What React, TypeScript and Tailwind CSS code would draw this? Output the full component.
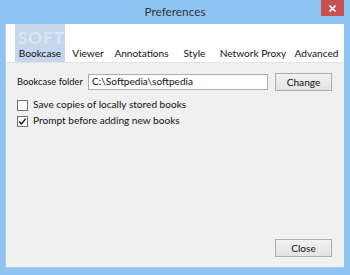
import React from 'react';

const TABS = [
  { label: 'Bookcase', w: 'w-[50px]', active: true },
  { label: 'Viewer', w: 'w-[46px]' },
  { label: 'Annotations', w: 'w-[61px]' },
  { label: 'Style', w: 'w-[45px]' },
  { label: 'Network Proxy', w: 'w-[72px]' },
  { label: 'Advanced', w: 'w-[55px]' },
];

function Checkbox({ checked, label }: { checked?: boolean; label: string }) {
  return (
    <label className="flex items-center h-[16px]">
      <span className="w-[11px] h-[11px] border border-[#707070] bg-white flex items-center justify-center">
        {checked && (
          <svg width="9" height="9" viewBox="0 0 9 9">
            <path d="M1.2 4.6 L3.4 7 L7.8 1.6" fill="none" stroke="#222" strokeWidth="1.5" />
          </svg>
        )}
      </span>
      <span className="ml-[5px] text-[#111] whitespace-nowrap">{label}</span>
    </label>
  );
}

function Button({ children }: { children: React.ReactNode }) {
  return (
    <button className="w-[57px] h-[18px] border border-[#adadad] bg-gradient-to-b from-[#f2f2f2] to-[#e3e3e3] text-[#111] leading-none">
      {children}
    </button>
  );
}

export default function App() {
  return (
    <div
      className="w-[350px] h-[275px] bg-[#8ec4f4] flex flex-col text-[10.1px] overflow-hidden"
      style={{ fontFamily: 'Lato, "Open Sans", sans-serif' }}
    >
      {/* Title bar */}
      <div className="h-[24px] grid grid-cols-[1fr_auto_1fr] items-start">
        <div />
        <div className="pt-[3px] text-[11.8px] text-[#333] leading-[18px] whitespace-nowrap">Preferences</div>
        <div className="flex justify-end pr-[6px]">
          <div className="w-[23px] h-[16px] bg-[#c75050] flex items-center justify-center">
            <svg width="7" height="7" viewBox="0 0 7 7">
              <path d="M0.5 0.5 L6.5 6.5 M6.5 0.5 L0.5 6.5" stroke="#fff" strokeWidth="1.6" />
            </svg>
          </div>
        </div>
      </div>

      {/* Client area */}
      <div className="ml-[5px] mr-[6px] mb-[7px] flex-1 flex flex-col border-l border-b border-[#b9c9da]">
        <div className="relative h-[39px] bg-white flex pl-[9px] border-b border-[#e3e3e3]">
          {TABS.map((t) => (
            <div
              key={t.label}
              className={`${t.w} h-full flex items-end justify-center pb-[1px] text-[#111] whitespace-nowrap ${
                t.active ? 'bg-[#c7d6ec]' : ''
              }`}
            >
              {t.label}
            </div>
          ))}
          <div className="absolute left-[12px] top-[4px] text-[17px] leading-[20px] font-bold tracking-[1px] text-white/40 pointer-events-none">
            SOFTPEDIA
          </div>
        </div>

        <div className="flex-1 bg-[#f0f0f0] flex flex-col pl-[11px] pr-[12px] pt-[10px] pb-[10px]">
          <div className="flex items-center h-[18px]">
            <span className="text-[#111] w-[71px] text-[9.4px] whitespace-nowrap">Bookcase folder</span>
            <div className="w-[180px] h-[16px] border border-[#abadb3] bg-white flex items-center pl-[3px] text-[#111] whitespace-nowrap">
              C:\Softpedia\softpedia
            </div>
            <div className="ml-[7px]">
              <Button>Change</Button>
            </div>
          </div>

          <div className="mt-[6px] flex flex-col">
            <Checkbox label="Save copies of locally stored books" />
            <Checkbox checked label="Prompt before adding new books" />
          </div>

          <div className="flex-1" />
          <div className="flex justify-end">
            <Button>Close</Button>
          </div>
        </div>
      </div>
    </div>
  );
}
